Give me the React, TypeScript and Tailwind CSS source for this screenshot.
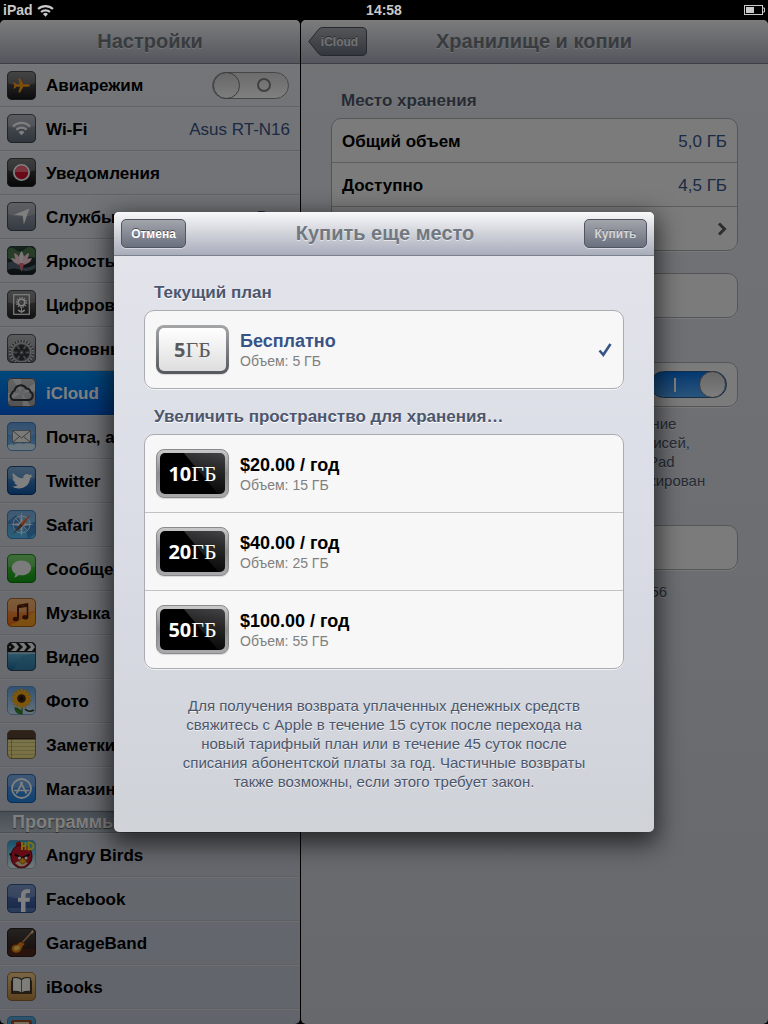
import { useState, type ReactNode } from "react";
import clsx from "clsx";

/* ---------- App icons ---------- */

type IconProps = {
  id: string;
  from: string;
  to: string;
  gloss?: boolean;
  stroke?: string;
  children?: ReactNode;
};

// Rounded tile with a vertical gradient; everything is clipped to it.
function Tile({ id, from, to, gloss = true, stroke = "#30343a", children }: IconProps) {
  return (
    <svg viewBox="0 0 29 29" className="size-[29px] shrink-0" aria-hidden="true">
      <defs>
        <linearGradient id={`${id}-g`} x1="0" y1="0" x2="0" y2="1">
          <stop offset="0" stopColor={from} />
          <stop offset="1" stopColor={to} />
        </linearGradient>
        <clipPath id={`${id}-c`}>
          <rect width="29" height="29" rx="5" />
        </clipPath>
      </defs>
      <g clipPath={`url(#${id}-c)`}>
        <rect width="29" height="29" fill={`url(#${id}-g)`} />
        {gloss && <path d="M0 0h29v12Q14.500 17 0 12Z" fill="#fff" opacity=".22" />}
        {children}
      </g>
      <rect x=".5" y=".5" width="28" height="28" rx="4.500" fill="none" stroke={stroke} opacity=".75" />
    </svg>
  );
}

const PlaneIcon = () => (
  <Tile id="plane" from="#6a6a6a" to="#161616">
    <path
      d="M23 14.500c0-.8-1.300-1.200-3-1.200h-3.600L13 7.500h-1.700l1.700 5.800H9.300L7.800 11.500H6.500l.8 3-.8 3h1.300l1.500-1.800H13l-1.700 5.800H13l3.400-5.800H20c1.700 0 3-.4 3-1.200Z"
      fill="#ff9c1a"
    />
  </Tile>
);

function WifiGlyph({ className, color = "#fff" }: { className?: string; color?: string }) {
  return (
    <svg viewBox="0 0 20 14" className={className} aria-hidden="true">
      <g fill="none" stroke={color} strokeWidth="2.300">
        <path d="M2 5.500a11.500 11.500 0 0 1 16 0" />
        <path d="M5.200 8.700a7 7 0 0 1 9.600 0" />
      </g>
      <path d="M7.300 10.700a4 4 0 0 1 5.400 0L10 13.600Z" fill={color} />
    </svg>
  );
}

const WifiIcon = () => (
  <Tile id="wifi" from="#9fa6b2" to="#626b7b">
    <g fill="none" stroke="#fff" strokeWidth="2.200">
      <path d="M6 12.500a12 12 0 0 1 17 0" />
      <path d="M9.300 15.800a7.300 7.300 0 0 1 10.400 0" />
    </g>
    <path d="M11.600 18.200a4.200 4.200 0 0 1 5.800 0l-2.900 3.100Z" fill="#fff" />
  </Tile>
);

const NotificationsIcon = () => (
  <Tile id="notif" from="#5d5d5d" to="#0c0c0c">
    <circle cx="14.500" cy="14.500" r="7.600" fill="#d31230" stroke="#fff" strokeWidth="1.800" />
    <path d="M8 14a6.500 6.500 0 0 1 13 0Z" fill="#f06a7c" />
  </Tile>
);

const LocationIcon = () => (
  <Tile id="loc" from="#a9afb9" to="#6c7586">
    <path d="M22.500 6.500 16.800 22.500l-1-8.800-8.800-1Z" fill="#fff" />
  </Tile>
);

const WallpaperIcon = () => (
  <Tile id="wall" from="#28483c" to="#151d22" gloss={false}>
    <path d="M0 3q5-3 9 1t9-1 11 2v7Q20 9 14 13T0 12Z" fill="#4e7b4f" />
    <path d="M0 17q7-4 12 2t17-1v4q-8 5-15 2T0 24Z" fill="#536572" />
    <path d="M14.500 5q4 5 1.500 12h-3q-2.500-7 1.500-12Z" fill="#fff0f3" />
    <path d="M7 7q6 2 7 10-6-1-7-10ZM22 7q0 8-7 10 0-7 7-10ZM4 12q7 0 10 6-7 1-10-6ZM25 12q-2 7-10 6 3-6 10-6Z" fill="#fbd3dc" />
    <path d="m12 18 2.500 8 2.500-8q-2.500-2-5 0Z" fill="#ea6880" />
    <path d="M10 18q4 3 9 0" stroke="#e9798d" fill="none" />
  </Tile>
);

const FrameIcon = () => (
  <Tile id="frame" from="#777" to="#222">
    <rect x="6.700" y="4.700" width="15.600" height="19.600" fill="none" stroke="#fff" strokeWidth="1.200" />
    <circle cx="14.500" cy="12.500" r="4.700" fill="none" stroke="#fff" strokeWidth="1.600" strokeDasharray="1.300 1.100" />
    <circle cx="14.500" cy="12.500" r="3.200" fill="none" stroke="#fff" strokeWidth="1.500" />
    <path d="M14.500 17v6M14.500 22q-1-2-3.500-2 .5 2 3.500 2Zm0 0q1-2 3.500-2-.5 2-3.500 2Z" fill="#fff" stroke="#fff" strokeWidth=".9" />
  </Tile>
);

const GearIcon = () => (
  <Tile id="gear" from="#a2a3a7" to="#6d6f74">
    <circle cx="14.500" cy="18.500" r="12.500" fill="#55575c" />
    <circle cx="14.500" cy="18.500" r="11.500" fill="none" stroke="#d0d1d3" strokeWidth="2.400" strokeDasharray="1.500 1.510" />
    <circle cx="14.500" cy="18.500" r="9.500" fill="none" stroke="#b6b7ba" strokeWidth="1.800" />
    <circle cx="14.500" cy="18.500" r="7.500" fill="#34363a" />
    <path d="m14.500 18.500-4.500-7M14.500 18.500l4.500-7M14.500 18.500h8.500M14.500 18.500H6M14.500 18.500l4.500 7M14.500 18.500l-4.500 7" stroke="#85878c" strokeWidth="2" />
    <circle cx="14.500" cy="18.500" r="3.600" fill="#4c4e53" stroke="#222" strokeWidth=".8" />
    <circle cx="14.500" cy="18.500" r="1" fill="#cfd0d2" />
  </Tile>
);

const CloudIcon = () => (
  <Tile id="cloud" from="#c9cacc" to="#a3a4a7" gloss={false}>
    <path d="M14 15 5 0h9ZM15 15 29 4v9ZM14 15 0 24v-9ZM15 15l9 14h-8Z" fill="#fff" opacity=".55" />
    <path
      d="M7.700 22h13.600a4.300 4.300 0 0 0 2.100-8.100 3.700 3.700 0 0 0-4.200-3.400 6.300 6.300 0 0 0-11.700 2.100 3.600 3.600 0 0 0-2.400 2.700A3.700 3.700 0 0 0 7.700 22Z"
      fill="#ddd"
      fillOpacity=".35"
      stroke="#35373c"
      strokeWidth="2"
    />
  </Tile>
);

const MailIcon = () => (
  <Tile id="mail" from="#3b83d9" to="#7cc5f7" stroke="#3674b8">
    <path d="M0 29v-5q4-3 7-1 4-3 9-1 5-2 13 1v6Z" fill="#e6f4fd" opacity=".85" />
    <rect x="5.500" y="8.500" width="18" height="12" fill="#f6f4ef" stroke="#7d8da0" />
    <path d="m6 9 8.500 7L23 9M6 20l6.500-5.500M23 20l-6.500-5.500" fill="none" stroke="#6f7c8c" />
  </Tile>
);

const TwitterIcon = () => (
  <Tile id="twitter" from="#5d9bd5" to="#0e55a5" stroke="#082f66">
    <path
      d="M25.500 9.800c-.6.300-1.200.5-2 .5.800-.5 1.300-1.100 1.600-2-.9.500-1.700.8-2.500.8-2.400-2.400-6.600-.8-6.500 3.200C12.200 12.500 8.800 10 6 7c-1 2.100-.5 4.300 1.200 5.700-.7 0-1.200-.1-1.700-.4.100 2 1.400 3.500 3.300 4-.6.200-1.100.2-1.700.1.500 1.500 1.900 2.500 3.600 2.600-1.700 1.200-3.800 1.600-5.900 1.500 8.200 4.500 17.800.7 18.300-8.500 1-.4 1.800-1.200 2.400-2.200Z"
      fill="#fff"
    />
  </Tile>
);

const SafariIcon = () => (
  <Tile id="safari" from="#5e9be0" to="#55c0f4" stroke="#3776b5">
    <path d="M0 12 9 5l5 7-5 9ZM18 16l11-5v12l-8 6Z" fill="#3273bd" opacity=".6" />
    <circle cx="14.500" cy="14.500" r="8.500" fill="none" stroke="#fff" strokeWidth=".8" />
    <path d="m14.500 2 1.500 11L27 14.500 16 16l-1.500 11L13 16 2 14.500 13 13Z" fill="#e8f4ff" />
    <path d="m8 8 13 13M21 8 8 21" stroke="#d8ecff" strokeWidth=".9" />
    <path d="m24 4-7.800 11.700-2.500-2.400Z" fill="#ee6a28" />
    <path d="M5.500 24.500 16.200 15.700l-2.500-2.400Z" fill="#70574a" />
  </Tile>
);

const MessagesIcon = () => (
  <Tile id="messages" from="#5fd34f" to="#0f9b12" stroke="#086b0a">
    <path d="M14.500 6.500c5.500 0 9.700 3.300 9.700 7.400s-4.200 7.300-9.700 7.300c-1 0-2-.1-2.900-.3-1.200 1.500-2.700 2.300-4.400 2.500.9-1 1.300-2.300 1.200-3.600-2.200-1.300-3.600-3.500-3.600-5.900 0-4.100 4.200-7.400 9.700-7.400Z" fill="#f5f7f5" />
  </Tile>
);

const MusicIcon = () => (
  <Tile id="music" from="#f7a955" to="#f26b12" stroke="#8b4a10">
    <path d="M0 29 29 14v15Z" fill="#ffc12e" opacity=".55" />
    <path d="M11 7.500 20.500 6v13" fill="none" stroke="#51200c" strokeWidth="1.600" />
    <path d="M11 7.500v13M11 9.300l9.500-1.500" fill="none" stroke="#51200c" strokeWidth="2" />
    <ellipse cx="8.800" cy="21" rx="3" ry="2.300" fill="#51200c" />
    <ellipse cx="18.300" cy="19.300" rx="3" ry="2.300" fill="#51200c" />
  </Tile>
);

const VideoIcon = () => (
  <Tile id="video" from="#8fdcf4" to="#17699f" gloss={false}>
    <path d="m6 29 9-15 14-3v18Z" fill="#3f8fb8" opacity=".6" />
    <path d="M0 0h29v10.500H0Z" fill="#1c1c1e" />
    <path d="M4 1h5l3 4H8ZM12 1h5l3 4h-4ZM20 1h5l3 4h-4ZM8 5h4l-3 4H4ZM16 5h4l-3 4h-5ZM24 5h4l-3 4h-5Z" fill="#f2f2f2" />
    <circle cx="3" cy="5" r="1" fill="#ddd" />
    <path d="M0 10.500h29v1H0Z" fill="#dff3fb" />
  </Tile>
);

const PETALS = Array.from({ length: 14 }, (_, i) => (i * 360) / 14);

const PhotosIcon = () => (
  <Tile id="photos" from="#5fa2e6" to="#cde6fa" gloss={false} stroke="#5f87b3">
    <path d="M15 19v10M15 28q-1-5-7-6 1 6 7 6Z" fill="#3c8e2c" stroke="#357a27" strokeWidth="1.300" />
    <path d="M18 23q4 4 9 1" fill="none" stroke="#2b3a2a" strokeWidth="1.500" />
    {PETALS.map((a) => (
      <path key={a} d="M14.500 12.500q-3.600-6 0-10.500 3.600 4.500 0 10.500Z" fill="#fbb41a" stroke="#e88a08" strokeWidth=".4" transform={`rotate(${a} 14.500 12.500)`} />
    ))}
    <circle cx="14.500" cy="12.500" r="4.300" fill="#43230f" />
    <circle cx="14.500" cy="12.500" r="2" fill="#1d1008" />
  </Tile>
);

const NotesIcon = () => (
  <Tile id="notes" from="#faf0a4" to="#efe084" gloss={false} stroke="#6b5837">
    <path d="M0 12.500h29M0 16.500h29M0 20.500h29M0 24.500h29" stroke="#d2c27a" />
    <path d="M4.500 9v20" stroke="#d98a66" />
    <path d="M0 0h29v8.500H0Z" fill="#5b4232" />
    <path d="M0 8h29v1.500H0Z" fill="#3a291d" />
  </Tile>
);

const StoreIcon = () => (
  <Tile id="store" from="#5d98e6" to="#1f86e3" stroke="#164c93">
    <circle cx="14.500" cy="14.500" r="9.500" fill="none" stroke="#fff" strokeWidth="1.800" />
    <path d="m15.500 8-6 11.500M13.500 8l6 11.500M7 16.500h15" fill="none" stroke="#fff" strokeWidth="1.700" />
  </Tile>
);

const BirdsIcon = () => (
  <Tile id="birds" from="#24a3d8" to="#f2f5f6" gloss={false} stroke="#8c979f">
    <path d="M9 6q-1-4 2-4 2-2 4 2l1 2Z" fill="#c21322" />
    <path d="M2 14q4-3 6 1l-3 3Z" fill="#1c1718" />
    <path d="M14 5c7 0 11 5 11 11.500S20 28 14.500 28 4 23.500 4 17 8 5 14 5Z" fill="#c7192b" stroke="#4a0d13" />
    <path d="M8 23q6-5 13 0-6 7-13 0Z" fill="#ead2ae" />
    <path d="M8 13.500 15 17l7.500-3.500.5 2-7.500 3.500L7.500 15.500Z" fill="#1b1112" />
    <circle cx="12.500" cy="18" r="1.500" fill="#fff" />
    <circle cx="19" cy="18" r="1.500" fill="#fff" />
    <path d="m15.500 17.500 4.500 4-4.500 2.500-3.500-2.500Z" fill="#f9ad15" stroke="#6a3d05" strokeWidth=".6" />
    <path d="M15 2v8M18.500 2v8M15 6h3.500M21.500 2.500v7q5-.5 5-3.500t-5-3.500Z" fill="none" stroke="#ffdd1c" strokeWidth="1.900" />
  </Tile>
);

const FacebookIcon = () => (
  <Tile id="facebook" from="#5b7ec2" to="#2c4d8f" stroke="#23407c">
    <path d="M0 24h29v5H0Z" fill="#6f8fc9" opacity=".6" />
    <path d="M14 28V17.800h-3v-4h3v-2.300c0-4 2.200-6.300 6-6.300h3V9h-2.500c-1.500 0-2 .8-2 2.200v2.600H23l-.5 4h-4V28Z" fill="#fff" />
  </Tile>
);

const GarageIcon = () => (
  <Tile id="garage" from="#4a4644" to="#2b1710" gloss={false} stroke="#201815">
    <path d="M0 21h29v8H0Z" fill="#52291b" />
    <path d="m14 16 11-12" stroke="#c69a61" strokeWidth="1.600" />
    <path d="m23.500 4.500 2-2.500 1.500 1.500-2 2.500Z" fill="#e6c48f" />
    <path d="M14.500 14q3 0 3 2.500-2 1-2.500 4-2 5-7 4.500-4-1.500-3.500-5.500 1-3 4.500-3 2 0 2.500-1.500t3-1Z" fill="#e8871d" stroke="#7b2f0c" strokeWidth=".8" />
    <path d="M8 18.500q4-2 5 1-1 3-5 3-2-2 0-4Z" fill="#ffd964" />
  </Tile>
);

const BooksIcon = () => (
  <Tile id="books" from="#f3ce8a" to="#b9853d" gloss={false} stroke="#7b5a27">
    <path d="M4 8.500h21V22H4Z" fill="#4a3a28" />
    <path d="M14.500 7.500Q11 4.500 5.500 6v13.500q5.500-1 9 1.500 3.500-2.500 9-1.500V6q-5.500-1.500-9 1.500Z" fill="#fbfaf5" stroke="#3c3228" strokeWidth="1.100" />
    <path d="M14.500 7.500V21" stroke="#6b6257" />
  </Tile>
);

const RadioIcon = () => (
  <Tile id="radio" from="#58acdf" to="#2d84c0" gloss={false} stroke="#3b7ea9">
    <rect x="4" y="4" width="21" height="22" rx="2" fill="#a34627" />
    <rect x="7" y="6" width="15" height="5" fill="#e8d9bb" />
  </Tile>
);

/* ---------- Controls ---------- */

function Switch({ label, on, onChange }: { label: string; on: boolean; onChange: () => void }) {
  return (
    <label className="relative block h-[27px] w-[77px] shrink-0">
      <input type="checkbox" role="switch" aria-label={label} checked={on} onChange={onChange} className="peer sr-only" />
      <span
        className={clsx(
          "flex h-full items-center rounded-full border",
          on
            ? "flex-row-reverse border-[#2b5c94] bg-linear-to-b from-[#0071e0] to-[#53a9f8]"
            : "border-[#8e8e92] bg-linear-to-b from-[#d8d8d9] to-white",
        )}
      >
        <span className="size-[27px] shrink-0 rounded-full border border-[#77777b] bg-linear-to-b from-[#cfcfcf] to-[#fcfcfc]" />
        <span className="flex flex-1 justify-center">
          {on ? <span className="h-3.5 w-0.5 bg-white" /> : <span className="size-3.5 rounded-full border-2 border-[#808084]" />}
        </span>
      </span>
    </label>
  );
}

const BAR = "flex h-11 shrink-0 items-center border-b border-[#79818f] bg-linear-to-b from-[#f9f9fa] to-[#a9adbb]";
const BAR_TITLE = "pb-0.5 text-xl leading-6 font-bold text-[#71787f] [text-shadow:0_1px_0_#ffffff90]";
const GROUP = "overflow-hidden rounded-[10px] border border-[#a9acb1] bg-[#f7f7f7] shadow-[0_1px_0_#ffffffb0]";
const CAPTION = "px-2.5 pb-[7px] text-[17px] leading-5 font-bold text-[#4c566c] [text-shadow:0_1px_0_#ffffff]";
const NOTE = "text-center text-[15px] leading-[19px] text-[#4c566c] [text-shadow:0_1px_0_#ffffffb0]";
const SMALL_BUTTON =
  "h-[29px] rounded-[5px] border border-[#50555f] bg-linear-to-b from-[#a3a5ab] to-[#6a707e] text-xs leading-4 font-bold shadow-[0_1px_0_#ffffff70]";

/* ---------- Sidebar ---------- */

type Item = { name: string; icon: () => ReactNode; value?: string };

const SETTINGS: Item[] = [
  { name: "Авиарежим", icon: PlaneIcon },
  { name: "Wi-Fi", icon: WifiIcon, value: "Asus RT-N16" },
  { name: "Уведомления", icon: NotificationsIcon },
  { name: "Службы геолокации", icon: LocationIcon, value: "Вкл." },
  { name: "Яркость и обои", icon: WallpaperIcon },
  { name: "Цифровая рамка", icon: FrameIcon },
  { name: "Основные", icon: GearIcon },
  { name: "iCloud", icon: CloudIcon },
  { name: "Почта, адреса, календари", icon: MailIcon },
  { name: "Twitter", icon: TwitterIcon },
  { name: "Safari", icon: SafariIcon },
  { name: "Сообщения", icon: MessagesIcon },
  { name: "Музыка", icon: MusicIcon },
  { name: "Видео", icon: VideoIcon },
  { name: "Фото", icon: PhotosIcon },
  { name: "Заметки", icon: NotesIcon },
  { name: "Магазин", icon: StoreIcon },
];

const APPS: Item[] = [
  { name: "Angry Birds", icon: BirdsIcon },
  { name: "Facebook", icon: FacebookIcon },
  { name: "GarageBand", icon: GarageIcon },
  { name: "iBooks", icon: BooksIcon },
  { name: "iRadio", icon: RadioIcon },
];

const ROW = "flex h-full w-full items-center gap-2.5 px-[7px] text-left text-[17px] leading-5 font-bold";

function SidebarRow({ item, selected, first }: { item: Item; selected?: boolean; first?: boolean }) {
  const [airplane, setAirplane] = useState(false);
  const Icon = item.icon;
  return (
    <li
      className={clsx(
        "shrink-0 border-b",
        first ? "h-[43px]" : "h-11",
        selected
          ? "border-[#0259c4] bg-linear-to-b from-[#0590f5] to-[#0160e4] text-white"
          : "border-[#c0c3c9] text-black shadow-[inset_0_1px_0_#ffffff50] [text-shadow:0_1px_0_#ffffff80]",
      )}
    >
      {first ? (
        <div className={ROW}>
          <Icon />
          <span className="flex-1 pt-0.5">{item.name}</span>
          <span className="pr-1">
            <Switch label={item.name} on={airplane} onChange={() => setAirplane(!airplane)} />
          </span>
        </div>
      ) : (
        <button type="button" className={ROW}>
          <Icon />
          <span className="flex-1 truncate pt-0.5">{item.name}</span>
          {item.value && <span className="pt-0.5 pr-[3px] font-normal text-[#385487]">{item.value}</span>}
        </button>
      )}
    </li>
  );
}

function Sidebar() {
  return (
    <nav className="flex w-[300px] shrink-0 flex-col overflow-hidden rounded-[5px] bg-linear-to-b from-[#e9ecf1] via-[#d9dbe3] to-[#c3cad6]">
      <header className={clsx(BAR, "justify-center")}>
        <h1 className={BAR_TITLE}>Настройки</h1>
      </header>
      <ul className="shrink-0">
        {SETTINGS.map((item, i) => (
          <SidebarRow key={item.name} item={item} first={i === 0} selected={item.name === "iCloud"} />
        ))}
      </ul>
      <h2 className="h-[22px] shrink-0 border-y border-t-[#717d8a] border-b-[#989ea6] bg-linear-to-b from-[#909fac] to-[#b6c0ca] px-3 text-lg leading-5 font-bold text-white [text-shadow:0_1px_1px_#00000080]">
        Программы
      </h2>
      <ul className="shrink-0">
        {APPS.map((item) => (
          <SidebarRow key={item.name} item={item} />
        ))}
      </ul>
    </nav>
  );
}

/* ---------- Detail pane ---------- */

const STORAGE = [
  { term: "Общий объем", value: "5,0 ГБ" },
  { term: "Доступно", value: "4,5 ГБ" },
];

function StoragePane() {
  const [backup, setBackup] = useState(true);
  return (
    <section className="flex min-w-0 flex-1 flex-col overflow-hidden rounded-[5px] bg-linear-to-b from-[#e4e7ec] via-[#dadde5] to-[#cdd1d8]">
      <header className={clsx(BAR, "px-[7px]")}>
        <button type="button" className="relative h-[29px] w-[59px] shrink-0 text-xs leading-4 font-bold text-[#e4e5e8]">
          <svg viewBox="0 0 59 29" className="absolute inset-0" aria-hidden="true">
            <defs>
              <linearGradient id="back-g" x1="0" y1="0" x2="0" y2="1">
                <stop offset="0" stopColor="#a9abb1" />
                <stop offset="1" stopColor="#666d7b" />
              </linearGradient>
            </defs>
            <path d="M.8 14.500 10.500 2.500Q12 .5 14.500.5H54q4.500 0 4.500 4.500v19q0 4.500-4.500 4.500H14.500q-2.500 0-4-2Z" fill="url(#back-g)" stroke="#4a505c" />
          </svg>
          <span className="relative pl-1 [text-shadow:0_-1px_0_#00000070]">iCloud</span>
        </button>
        <h1 className={clsx(BAR_TITLE, "flex-1 pr-[68px] pl-2 text-center")}>Хранилище и копии</h1>
      </header>

      <div className="flex flex-col px-[30px] pt-[27px]">
        <h2 className={CAPTION}>Место хранения</h2>
        <div className={GROUP}>
          <dl>
            {STORAGE.map((row) => (
              <div key={row.term} className="flex h-11 items-center justify-between border-b border-[#b8babf] px-2.5 pt-0.5 text-[17px] leading-5">
                <dt className="font-bold">{row.term}</dt>
                <dd className="text-[#385487]">{row.value}</dd>
              </div>
            ))}
          </dl>
          <button type="button" className="flex h-[43px] w-full items-center justify-between px-2.5 text-[17px] leading-5 font-bold">
            Хранилище
            <svg viewBox="0 0 10 14" className="h-3.5 w-2.5" aria-hidden="true">
              <path d="m2 1.500 5.500 5.500L2 12.500" fill="none" stroke="#5b5b60" strokeWidth="3" />
            </svg>
          </button>
        </div>
        <button type="button" className={clsx(GROUP, "mt-[22px] h-[45px] text-[17px] leading-5 font-bold")}>
          Изменить план
        </button>
        <h2 className={clsx(CAPTION, "pt-[17px]")}>Резервная копия</h2>
        <div className={clsx(GROUP, "flex h-[45px] items-center justify-between px-2.5")}>
          <span className="text-[17px] leading-5 font-bold">Копирование в iCloud</span>
          <Switch label="Копирование в iCloud" on={backup} onChange={() => setBackup(!backup)} />
        </div>
        <p className={clsx(NOTE, "pt-[7px]")}>
          Автоматическое резервное копирование
          <br />
          фотопленки, документов и учетных записей,
          <br />
          а также настроек устройства, когда iPad
          <br />
          подключен к питанию, сети Wi-Fi и заблокирован
        </p>
        <button type="button" className={clsx(GROUP, "mt-[35px] h-[45px] text-[17px] leading-5 font-bold")}>
          Создать копию
        </button>
        <p className={clsx(NOTE, "pt-3")}>Последнее копирование было в 14:56</p>
      </div>
    </section>
  );
}

/* ---------- Purchase sheet ---------- */

type Plan = { size: string; title: string; total: string };

const CURRENT: Plan = { size: "5", title: "Бесплатно", total: "Объем: 5 ГБ" };

const UPGRADES: Plan[] = [
  { size: "10", title: "$20.00 / год", total: "Объем: 15 ГБ" },
  { size: "20", title: "$40.00 / год", total: "Объем: 25 ГБ" },
  { size: "50", title: "$100.00 / год", total: "Объем: 55 ГБ" },
];

function Badge({ size, light }: { size: string; light?: boolean }) {
  return (
    <span
      className={clsx(
        "flex h-[49px] w-[73px] shrink-0 rounded-lg p-[3px] shadow-[0_1px_1px_#00000020]",
        light ? "bg-linear-to-b from-[#a5a6a8] to-[#55585d]" : "border border-[#8a8a8c] bg-linear-to-b from-[#c9c9c9] via-[#8c8c8e] to-[#a9a9ab]",
      )}
    >
      <span
        className={clsx(
          "flex flex-1 items-center justify-center rounded-[5px] leading-6",
          light
            ? "bg-linear-to-b from-white to-[#dedede] text-[#5b5b5b]"
            : "bg-[linear-gradient(to_bottom,transparent,#000000d0),linear-gradient(50deg,#000_0%,#000_58%,#343436_59%,#444446_100%)] text-white",
        )}
      >
        <span className="font-['Open_Sans',sans-serif] text-xl leading-6 font-bold">{size}</span>
        <span className="font-['Liberation_Serif',serif] text-[22px]">ГБ</span>
      </span>
    </span>
  );
}

function PlanRow({ plan, current, selected, onSelect }: { plan: Plan; current?: boolean; selected: boolean; onSelect: () => void }) {
  return (
    <label className="relative flex h-[78px] items-center gap-[11px] border-b border-[#c0c2c6] px-[11px] last:h-[77px] last:border-b-0">
      <input type="radio" name="plan" checked={selected} onChange={onSelect} className="sr-only" />
      <Badge size={plan.size} light={current} />
      <span className="flex flex-1 flex-col">
        <span className={clsx("text-lg leading-[22px] font-bold", selected ? "text-[#385487]" : "text-black")}>{plan.title}</span>
        <span className="text-sm leading-[18px] text-[#808080]">{plan.total}</span>
      </span>
      {selected && (
        <svg viewBox="0 0 14 14" className="size-3.5" aria-hidden="true">
          <path d="m1.500 7.500 3.800 4.300L12.500 1" fill="none" stroke="#385487" strokeWidth="2.600" />
        </svg>
      )}
    </label>
  );
}

function PurchaseSheet() {
  const [chosen, setChosen] = useState(CURRENT.size);
  return (
    <div
      role="dialog"
      aria-label="Купить еще место"
      className="flex h-[620px] w-[540px] max-w-full flex-col overflow-hidden rounded-[5px] bg-linear-to-b from-[#e4e5eb] via-[#dadde6] to-[#cfd2d7] shadow-[0_8px_24px_4px_#000000a0]"
    >
      <header className={clsx(BAR, "justify-between px-[7px]")}>
        <button type="button" className={clsx(SMALL_BUTTON, "w-[65px] text-white [text-shadow:0_-1px_0_#00000080]")}>
          Отмена
        </button>
        <h2 className={BAR_TITLE}>Купить еще место</h2>
        <button
          type="button"
          disabled={chosen === CURRENT.size}
          className={clsx(SMALL_BUTTON, "w-[63px] text-white disabled:text-[#d3d4d8] [text-shadow:0_-1px_0_#00000050]")}
        >
          Купить
        </button>
      </header>

      <div className="flex flex-col px-[30px] pt-[27px]">
        <h3 className={CAPTION}>Текущий план</h3>
        <div className={GROUP}>
          <PlanRow plan={CURRENT} current selected={chosen === CURRENT.size} onSelect={() => setChosen(CURRENT.size)} />
        </div>
        <h3 className={clsx(CAPTION, "pt-[18px]")}>Увеличить пространство для хранения…</h3>
        <div className={GROUP}>
          {UPGRADES.map((plan) => (
            <PlanRow key={plan.size} plan={plan} selected={chosen === plan.size} onSelect={() => setChosen(plan.size)} />
          ))}
        </div>
        <p className={clsx(NOTE, "mx-auto max-w-[415px] pt-[27px]")}>
          Для получения возврата уплаченных денежных средств свяжитесь с Apple в течение 15 суток после перехода на новый
          тарифный план или в течение 45 суток после списания абонентской платы за год. Частичные возвраты также
          возможны, если этого требует закон.
        </p>
      </div>
    </div>
  );
}

function StatusBar() {
  return (
    <div className="grid h-5 shrink-0 grid-cols-3 items-center px-[3px] text-sm leading-4 font-bold text-[#c9c9c9]">
      <span className="flex items-center gap-[3px]">
        iPad
        <WifiGlyph className="h-[13px] w-[19px]" color="#c9c9c9" />
      </span>
      <span className="text-center">14:58</span>
      <svg viewBox="0 0 21 10" className="h-2.5 w-[21px] justify-self-end" aria-label="Батарея">
        <rect x=".5" y=".5" width="18" height="9" fill="none" stroke="#c9c9c9" />
        <rect x="2" y="2" width="8" height="6" fill="#c9c9c9" />
        <path d="M19 3h1.500v4H19" fill="none" stroke="#c9c9c9" />
      </svg>
    </div>
  );
}

export default function App() {
  return (
    <div className="flex h-screen flex-col overflow-hidden bg-black font-['Liberation_Sans',Arial,sans-serif] text-black">
      <StatusBar />
      <main className="relative flex min-h-0 flex-1 gap-px">
        <Sidebar />
        <StoragePane />
        <div className="absolute inset-0 flex items-center justify-center bg-black/50">
          <PurchaseSheet />
        </div>
      </main>
    </div>
  );
}
